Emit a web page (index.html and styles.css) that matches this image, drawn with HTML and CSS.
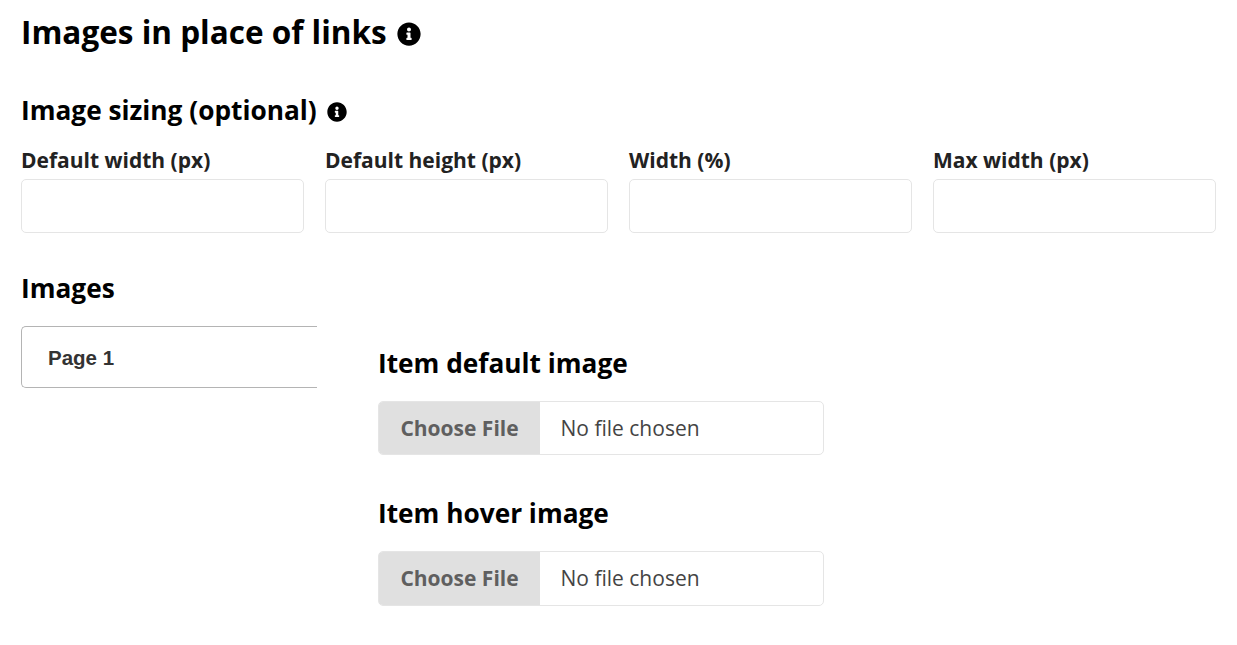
FILE: index.html
```html
<!DOCTYPE html>
<html lang="en">
<head>
  <meta charset="UTF-8" />
  <title>Images in place of links</title>
  <link rel="stylesheet" href="styles.css">
</head>
<body>
  <h1 class="title">Images in place of links
    <svg class="info info-lg" viewBox="0 0 512 512"><path d="M256 8C119.043 8 8 119.083 8 256c0 136.997 111.043 248 248 248s248-111.003 248-248C504 119.083 392.957 8 256 8zm0 110c23.196 0 42 18.804 42 42s-18.804 42-42 42-42-18.804-42-42 18.804-42 42-42zm56 254c0 6.627-5.373 12-12 12h-88c-6.627 0-12-5.373-12-12v-24c0-6.627 5.373-12 12-12h12v-64h-12c-6.627 0-12-5.373-12-12v-24c0-6.627 5.373-12 12-12h64c6.627 0 12 5.373 12 12v100h12c6.627 0 12 5.373 12 12v24z"/></svg>
  </h1>

  <h2 class="subtitle">Image sizing (optional)
    <svg class="info info-sm" viewBox="0 0 512 512"><path d="M256 8C119.043 8 8 119.083 8 256c0 136.997 111.043 248 248 248s248-111.003 248-248C504 119.083 392.957 8 256 8zm0 110c23.196 0 42 18.804 42 42s-18.804 42-42 42-42-18.804-42-42 18.804-42 42-42zm56 254c0 6.627-5.373 12-12 12h-88c-6.627 0-12-5.373-12-12v-24c0-6.627 5.373-12 12-12h12v-64h-12c-6.627 0-12-5.373-12-12v-24c0-6.627 5.373-12 12-12h64c6.627 0 12 5.373 12 12v100h12c6.627 0 12 5.373 12 12v24z"/></svg>
  </h2>

  <div class="sizing">
    <div class="field">
      <label for="dw">Default width (px)</label>
      <input type="text" id="dw" />
    </div>
    <div class="field">
      <label for="dh">Default height (px)</label>
      <input type="text" id="dh" />
    </div>
    <div class="field">
      <label for="wp">Width (%)</label>
      <input type="text" id="wp" />
    </div>
    <div class="field">
      <label for="mw">Max width (px)</label>
      <input type="text" id="mw" />
    </div>
  </div>

  <h2 class="subtitle images-title">Images</h2>

  <div class="images">
    <div class="tabs">
      <div class="tab">Page 1</div>
    </div>
    <div class="pane">
      <h2 class="subtitle">Item default image</h2>
      <input class="file" type="file" />
      <h2 class="subtitle hover-title">Item hover image</h2>
      <input class="file" type="file" />
    </div>
  </div>
</body>
</html>
```

FILE: styles.css
```css
:root {
  --border: #e5e5e5;
  --text: #222222;
}

* {
  box-sizing: border-box;
}

html {
  overflow: hidden;
}

body {
  font-family: 'Open Sans', sans-serif;
  margin: 0;
  padding: 0 21px;
  background-color: #ffffff;
  color: #000000;
}

.title {
  display: flex;
  align-items: center;
  gap: 10px;
  margin: 0;
  padding-top: 10px;
  font-size: 31.5px;
  line-height: 44px;
  font-weight: 700;
}

.subtitle {
  display: flex;
  align-items: center;
  gap: 10px;
  margin: 0;
  font-size: 26.25px;
  line-height: 34px;
  font-weight: 700;
}

.title + .subtitle {
  margin-top: 39px;
}

.info {
  flex: none;
  fill: #000000;
}

.info-lg {
  width: 24px;
  height: 24px;
  margin-top: 3px;
}

.info-sm {
  width: 20px;
  height: 20px;
  margin-top: 3px;
}

.sizing {
  display: grid;
  grid-template-columns: repeat(4, 1fr);
  gap: 21px;
  margin-top: 20px;
}

label {
  display: block;
  font-size: 21px;
  line-height: 27px;
  font-weight: 700;
  color: var(--text);
  margin-bottom: 5px;
}

input[type="text"] {
  display: block;
  width: 100%;
  height: 54px;
  border: 1px solid var(--border);
  border-radius: 5px;
  background: #ffffff;
  outline: none;
}

.images-title {
  margin-top: 38px;
}

.images {
  display: flex;
  margin-top: 21px;
}

.tabs {
  width: 296px;
  flex: none;
}

.tab {
  height: 62px;
  padding-left: 26px;
  border: 1px solid #b4b4b4;
  border-right: none;
  border-radius: 5px 0 0 5px;
  font-family: 'Liberation Sans', sans-serif;
  font-size: 20.5px;
  line-height: 62px;
  font-weight: 700;
  color: #333333;
}

.pane {
  margin-left: 61px;
  padding-top: 20px;
}

.file {
  display: block;
  width: 446px;
  height: 54px;
  margin-top: 21px;
  border: 1px solid var(--border);
  border-radius: 5px;
  overflow: hidden;
  font-family: 'Open Sans', sans-serif;
  font-size: 21px;
  line-height: 52px;
  color: #444444;
}

.file::file-selector-button {
  width: 161px;
  height: 52px;
  margin-right: 20.5px;
  border: none;
  background-color: #e0e0e0;
  font-family: 'Open Sans', sans-serif;
  font-size: 21px;
  font-weight: 700;
  color: #5f5f5f;
}

.hover-title {
  margin-top: 41px;
}

.hover-title + .file {
  height: 55px;
  padding-bottom: 1px;
}

.hover-title + .file::file-selector-button {
  box-shadow: 0 1px 0 #e0e0e0;
}
```
